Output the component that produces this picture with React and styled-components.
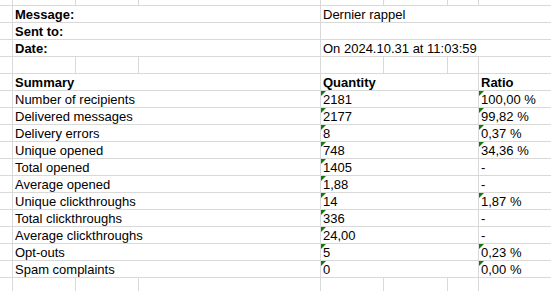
import React from "react";
import styled, { createGlobalStyle } from "styled-components";

const Global = createGlobalStyle`
  html, body {
    margin: 0;
    padding: 0;
    background: #fff;
  }
  body {
    font-family: "Liberation Sans", Arial, sans-serif;
    font-size: 13px;
    color: #000;
    overflow: hidden;
  }
`;

const Sheet = styled.div`
  display: grid;
  grid-template-columns: 13px 63px 63px 182px 63px 64px 31px 120px;
  grid-template-rows: 6px repeat(16, 17px) 20px;
  width: 551px;
  height: 291px;
  overflow: hidden;
`;

const Cell = styled.div`
  position: relative;
  box-sizing: border-box;
  grid-column: span ${(p) => p.$span || 1};
  display: flex;
  align-items: flex-end;
  padding: 0 0 0 2px;
  line-height: 15px;
  white-space: nowrap;
  overflow: hidden;
  border-right: ${(p) => (p.$open ? "none" : "1px solid #d9d9d9")};
  border-bottom: 1px solid #d9d9d9;
  font-weight: ${(p) => (p.$bold ? 700 : 400)};

  ${(p) =>
    p.$flag &&
    `
    &::before {
      content: "";
      position: absolute;
      left: 0;
      top: 0;
      width: 0;
      height: 0;
      border-top: 5px solid #107c10;
      border-right: 5px solid transparent;
    }
  `}
`;

const meta = [
  ["Message:", "Dernier rappel"],
  ["Sent to:", ""],
  ["Date:", "On 2024.10.31 at 11:03:59"],
];

const rows = [
  ["Number of recipients", "2181", "100,00 %"],
  ["Delivered messages", "2177", "99,82 %"],
  ["Delivery errors", "8", "0,37 %"],
  ["Unique opened", "748", "34,36 %"],
  ["Total opened", "1405", "-"],
  ["Average opened", "1,88", "-"],
  ["Unique clickthroughs", "14", "1,87 %"],
  ["Total clickthroughs", "336", "-"],
  ["Average clickthroughs", "24,00", "-"],
  ["Opt-outs", "5", "0,23 %"],
  ["Spam complaints", "0", "0,00 %"],
];

function BlankRow() {
  return (
    <>
      {Array.from({ length: 8 }).map((_, i) => (
        <Cell key={i} $open={i === 7} />
      ))}
    </>
  );
}

export default function App() {
  return (
    <>
      <Global />
      <Sheet>
        <BlankRow />
        {meta.map(([label, value]) => (
          <React.Fragment key={label}>
            <Cell />
            <Cell $span={3} $bold>
              {label}
            </Cell>
            <Cell $span={4} $open>
              {value}
            </Cell>
          </React.Fragment>
        ))}
        <BlankRow />
        <Cell />
        <Cell $span={3} $bold>
          Summary
        </Cell>
        <Cell $span={3} $bold>
          Quantity
        </Cell>
        <Cell $bold $open>
          Ratio
        </Cell>
        {rows.map(([label, qty, ratio]) => (
          <React.Fragment key={label}>
            <Cell />
            <Cell $span={3}>{label}</Cell>
            <Cell $span={3} $flag>
              {qty}
            </Cell>
            <Cell $open $flag={ratio !== "-"}>
              {ratio}
            </Cell>
          </React.Fragment>
        ))}
        <BlankRow />
      </Sheet>
    </>
  );
}
